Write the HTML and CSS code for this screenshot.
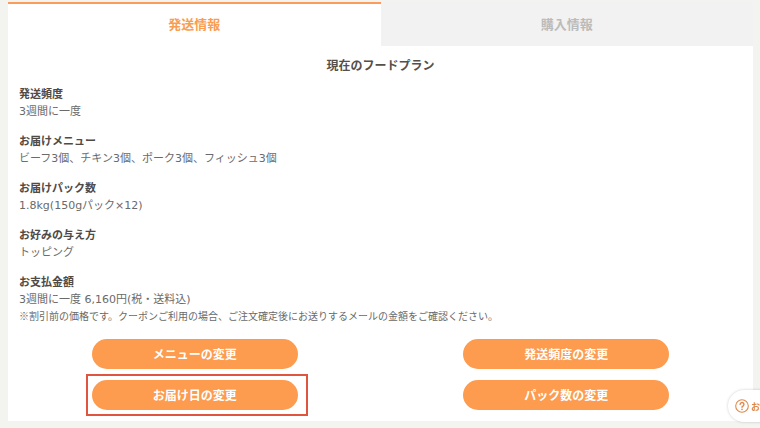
FILE: index.html
```html
<!DOCTYPE html>
<html lang="ja">
  <head>
    <meta charset="UTF-8" />
    <meta name="viewport" content="width=device-width, initial-scale=1.0" />
    <title>現在のフードプラン</title>
    <link rel="stylesheet" href="styles.css">
  </head>
  <body>
    <main class="card">
      <div class="tabs" role="tablist">
        <button class="tab active" type="button" role="tab" aria-selected="true">発送情報</button>
        <button class="tab" type="button" role="tab" aria-selected="false">購入情報</button>
      </div>

      <h1 class="title">現在のフードプラン</h1>

      <dl class="plan">
        <div class="item">
          <dt>発送頻度</dt>
          <dd>3週間に一度</dd>
        </div>
        <div class="item">
          <dt>お届けメニュー</dt>
          <dd>ビーフ3個、チキン3個、ポーク3個、フィッシュ3個</dd>
        </div>
        <div class="item">
          <dt>お届けパック数</dt>
          <dd>1.8kg(150gパック×12)</dd>
        </div>
        <div class="item">
          <dt>お好みの与え方</dt>
          <dd>トッピング</dd>
        </div>
        <div class="item">
          <dt>お支払金額</dt>
          <dd>3週間に一度 6,160円(税・送料込)</dd>
          <dd class="note">※割引前の価格です。クーポンご利用の場合、ご注文確定後にお送りするメールの金額をご確認ください。</dd>
        </div>
      </dl>

      <div class="actions">
        <button class="btn" type="button">メニューの変更</button>
        <button class="btn" type="button">発送頻度の変更</button>
        <button class="btn marked" type="button">お届け日の変更</button>
        <button class="btn" type="button">パック数の変更</button>
      </div>
    </main>

    <button class="help" type="button">
      <svg class="help-icon" viewBox="0 0 14 14" fill="none" stroke="currentColor" aria-hidden="true">
        <circle cx="7" cy="7" r="6.3" stroke-width="1.1" />
        <path d="M5.1 5.4a1.9 1.9 0 1 1 3.1 1.5c-.8.6-1.2.8-1.2 1.4" stroke-width="1.4" stroke-linecap="round" />
        <circle cx="7" cy="10.4" r=".8" fill="currentColor" stroke="none" />
      </svg>
      <span>お</span>
    </button>
  </body>
</html>
```

FILE: styles.css
```css
* {
  box-sizing: border-box;
}

body {
  margin: 0;
  padding: 2px 7px 7px 8px;
  overflow: hidden;
  background-color: #f3f3f0;
  color: #6a6a6a;
  font-family: "Noto Sans CJK JP", sans-serif;
  font-size: 11px;
  line-height: 18px;
}

button {
  margin: 0;
  padding: 0;
  border: 0;
  font-family: inherit;
  font-weight: bold;
}

.card {
  background-color: #fff;
}

/* タブ */
.tabs {
  display: flex;
}

.tab {
  flex: 1;
  height: 44px;
  padding-bottom: 4px;
  border-top: 2px solid #f2f2f2;
  background-color: #f2f2f2;
  color: #bbb;
  font-size: 13px;
}

.tab.active {
  border-top-color: #fb9b5c;
  background-color: #fff;
  color: #f99d50;
}

.title {
  margin: 0;
  padding-top: 10px;
  color: #55504a;
  font-size: 12px;
  line-height: 18px;
  text-align: center;
}

/* プラン内容 */
.plan {
  display: flex;
  flex-direction: column;
  gap: 9px;
  margin: 0;
  padding: 10px 11px 0;
}

.plan dt {
  color: #504a46;
  font-weight: bold;
}

.plan dd {
  margin: 0;
  font-family: "DejaVu Sans", "Noto Sans CJK JP", sans-serif;
  line-height: 20px;
}

.plan .note {
  font-family: inherit;
  font-size: 10px;
  line-height: 12px;
}

/* 変更ボタン */
.actions {
  display: grid;
  grid-template-columns: 1fr 1fr;
  justify-items: center;
  row-gap: 11px;
  padding: 17px 1px 11px;
}

.btn {
  position: relative;
  width: 206px;
  height: 30px;
  padding-bottom: 2px;
  border-radius: 15px;
  background-color: #fd9b4e;
  color: #fff;
  font-size: 12px;
}

.marked::after {
  content: "";
  position: absolute;
  inset: -6px -10px -6px -6px;
  border: 2px solid #e0553f;
}

/* 右下のヘルプ */
.help {
  position: fixed;
  right: -30px;
  bottom: 6px;
  display: flex;
  align-items: center;
  gap: 2px;
  width: 62px;
  height: 32px;
  padding-left: 7px;
  border-radius: 16px;
  background-color: #fff;
  box-shadow: 0 0 3px rgba(0, 0, 0, 0.2);
  color: #e0894d;
  font-size: 9px;
}

.help-icon {
  width: 14px;
  height: 14px;
}
```
